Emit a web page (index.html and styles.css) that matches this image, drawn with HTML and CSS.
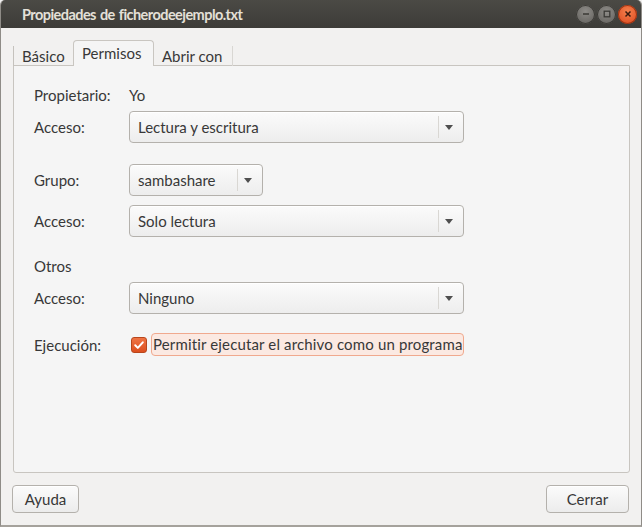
FILE: index.html
```html
<!DOCTYPE html>
<html lang="es">
<head>
<meta charset="utf-8">
<title>Propiedades de ficherodeejemplo.txt</title>
<link rel="stylesheet" href="styles.css">
</head>
<body>
<div class="window">
  <header class="titlebar">
    <span class="title">Propiedades de ficherodeejemplo.txt</span>
    <div class="wbtns">
      <span class="wbtn min"><svg width="10" height="10" viewBox="0 0 10 10"><path d="M2 5h6" stroke="#3a3935" stroke-width="1.6"/></svg></span>
      <span class="wbtn max"><svg width="10" height="10" viewBox="0 0 10 10"><rect x="2.2" y="2.2" width="5.6" height="5.6" fill="none" stroke="#3a3935" stroke-width="1.3"/></svg></span>
      <span class="wbtn close"><svg width="10" height="10" viewBox="0 0 10 10"><path d="M2.5 2.5l5 5M7.5 2.5l-5 5" stroke="#3a1a0e" stroke-width="1.5"/></svg></span>
    </div>
  </header>
  <main class="body">
    <div class="tabs">
      <div class="tab first">Básico</div>
      <div class="tab active">Permisos</div>
      <div class="tab">Abrir con</div>
    </div>
    <section class="panel">
      <div class="row r-owner">
        <span class="label">Propietario:</span>
        <span class="value">Yo</span>
      </div>
      <div class="row r-a1">
        <span class="label">Acceso:</span>
        <div class="combo wide"><span class="ctext">Lectura y escritura</span><span class="sep"></span><span class="arrow"></span></div>
      </div>
      <div class="row r-group">
        <span class="label">Grupo:</span>
        <div class="combo narrow"><span class="ctext">sambashare</span><span class="sep"></span><span class="arrow"></span></div>
      </div>
      <div class="row r-a2">
        <span class="label">Acceso:</span>
        <div class="combo wide"><span class="ctext">Solo lectura</span><span class="sep"></span><span class="arrow"></span></div>
      </div>
      <div class="row r-others">
        <span class="label">Otros</span>
      </div>
      <div class="row r-a3">
        <span class="label">Acceso:</span>
        <div class="combo wide"><span class="ctext">Ninguno</span><span class="sep"></span><span class="arrow"></span></div>
      </div>
      <div class="row r-exec">
        <span class="label">Ejecución:</span>
        <div class="check">
          <span class="box"><svg width="12" height="12" viewBox="0 0 12 12"><path d="M2.2 6.3l2.6 2.6 5-5.6" fill="none" stroke="#fff" stroke-width="2" stroke-linecap="round" stroke-linejoin="round"/></svg></span>
          <span class="clabel">Permitir ejecutar el archivo como un programa</span>
        </div>
      </div>
    </section>
    <footer class="buttons">
      <button class="btn help">Ayuda</button>
      <button class="btn close-btn">Cerrar</button>
    </footer>
  </main>
</div>
</body>
</html>
```
FILE: styles.css
```css
html, body {
  margin: 0;
  padding: 0;
  background: #f2f1f0;
}
body {
  font-family: Lato, "Open Sans", "Noto Sans", sans-serif;
  font-size: 15px;
  color: #383838;
}
.window {
  width: 642px;
  height: 527px;
  box-sizing: border-box;
  display: flex;
  flex-direction: column;
  background: #f2f1f0;
  border-left: 1px solid #8f8c87;
  border-right: 1px solid #8f8c87;
  border-bottom: 2px solid #a5a29c;
  border-radius: 5px 5px 0 0;
  overflow: hidden;
}
.titlebar {
  height: 28px;
  flex: none;
  display: flex;
  align-items: center;
  justify-content: space-between;
  background: linear-gradient(#4b4a45, #3d3c38);
  padding: 0 4px 0 21px;
}
.title {
  color: #e4e0d8;
  font-weight: bold;
  font-size: 14.5px;
  letter-spacing: -0.55px;
  word-spacing: 1px;
}
.wbtns {
  display: flex;
  gap: 2px;
}
.wbtn {
  width: 19px;
  height: 19px;
  border-radius: 50%;
  display: flex;
  align-items: center;
  justify-content: center;
  background: radial-gradient(circle at 50% 35%, #8e8c88, #5e5c58);
  box-shadow: inset 0 0 0 1px #3a3935;
}
.wbtn.close {
  background: radial-gradient(circle at 50% 35%, #f5814d, #d9441b);
  box-shadow: inset 0 0 0 1px #9c3312;
}
.body {
  flex: 1;
  display: flex;
  flex-direction: column;
  padding: 12px 11px 0 12px;
}
.tabs {
  display: flex;
  align-items: flex-end;
  height: 26px;
  position: relative;
  z-index: 1;
  margin-bottom: -1px;
}
.tab {
  height: 20px;
  padding: 0 8px;
  line-height: 20px;
  border-right: 1px solid #d9d7d3;
  box-sizing: content-box;
}
.tab.first {
  border-left: 1px solid #c5c2bd;
  width: 43px;
}
.tab.active {
  height: 25px;
  line-height: 24px;
  background: #f5f5f5;
  border: 1px solid #c9c6c1;
  border-bottom: none;
  border-radius: 4px 4px 0 0;
  margin-left: -1px;
  width: 63px;
}
.tab:last-child {
  width: 62px;
}
.panel {
  height: 408px;
  box-sizing: border-box;
  background: #f5f5f5;
  border: 1px solid #c8c5c0;
  border-radius: 0 0 3px 3px;
  padding: 19px 0 0 20px;
  display: flex;
  flex-direction: column;
}
.row {
  display: flex;
  align-items: center;
}
.label {
  width: 95px;
  flex: none;
}
.r-owner { height: 20px; }
.r-a1 { margin-top: 6px; }
.r-group { margin-top: 21px; }
.r-a2 { margin-top: 9px; }
.r-others { height: 20px; margin-top: 19px; }
.r-a3 { margin-top: 6px; }
.r-exec { margin-top: 19px; }
.combo {
  height: 32px;
  box-sizing: border-box;
  border: 1px solid #b4b1ac;
  border-radius: 4px;
  background: linear-gradient(#fbfbfb, #ededed);
  box-shadow: inset 0 1px 0 #ffffff;
  display: flex;
  align-items: center;
  padding-left: 8px;
}
.combo.wide { width: 335px; }
.combo.narrow { width: 134px; }
.ctext { flex: 1; }
.sep {
  width: 1px;
  height: 22px;
  background: #d9d7d3;
  margin-right: 6px;
}
.arrow {
  width: 0;
  height: 0;
  border-left: 4px solid transparent;
  border-right: 4px solid transparent;
  border-top: 5px solid #4f4f4f;
  margin-right: 10px;
}
.check {
  display: flex;
  align-items: center;
  gap: 4px;
  padding-left: 2px;
}
.box {
  width: 16px;
  height: 16px;
  box-sizing: border-box;
  border-radius: 3px;
  border: 1px solid #b8461c;
  background: linear-gradient(#ef7444, #dc4f1f);
  display: flex;
  align-items: center;
  justify-content: center;
}
.clabel {
  height: 23px;
  box-sizing: border-box;
  border: 1px solid #f0a98e;
  border-radius: 4px;
  background: #fbe9e2;
  padding: 0 1px;
  line-height: 21px;
  width: 313px;
  white-space: nowrap;
  letter-spacing: 0.15px;
}
.buttons {
  display: flex;
  justify-content: space-between;
  padding: 12px 1px 0 0;
  margin-left: -1px;
}
.btn {
  font: inherit;
  color: #383838;
  height: 28px;
  box-sizing: border-box;
  border: 1px solid #b4b1ac;
  border-radius: 4px;
  background: linear-gradient(#fbfbfb, #ececec);
  box-shadow: inset 0 1px 0 #ffffff;
  padding: 0;
}
.btn.help { width: 67px; }
.btn.close-btn { width: 83px; }
```
